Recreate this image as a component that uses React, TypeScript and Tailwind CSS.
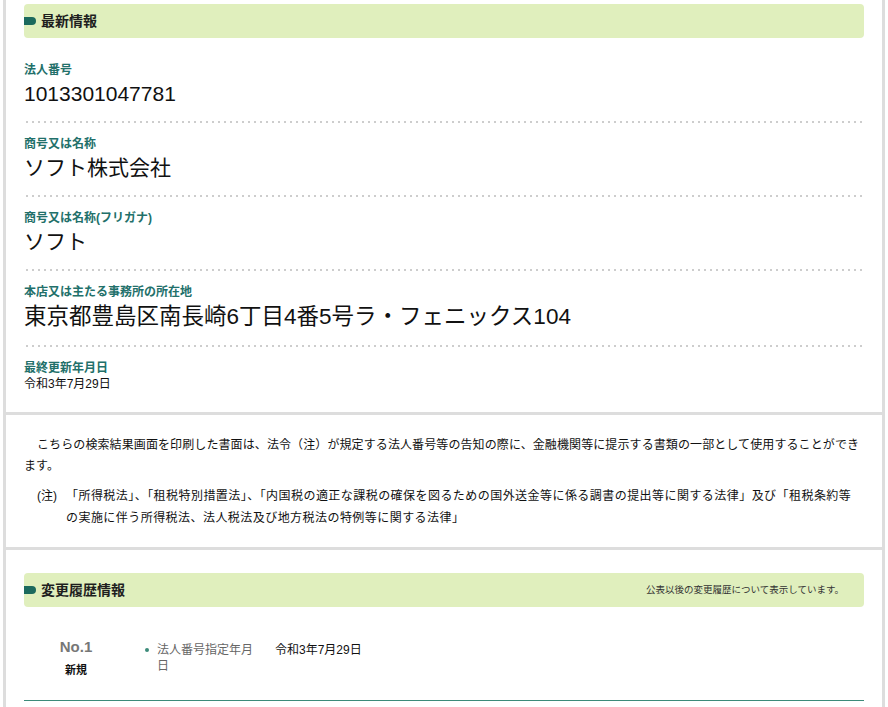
const FONT = "font-['Liberation_Sans','Noto_Sans_CJK_JP',sans-serif]";

const ITEMS = [
  { label: '法人番号', value: '1013301047781', size: 'text-[21px] leading-[28px]' },
  { label: '商号又は名称', value: 'ソフト株式会社', size: 'text-[21px] leading-[28px]' },
  { label: '商号又は名称(フリガナ)', value: 'ソフト', size: 'text-[21px] leading-[28px]' },
  {
    label: '本店又は主たる事務所の所在地',
    value: '東京都豊島区南長崎6丁目4番5号ラ・フェニックス104',
    size: 'text-[22.5px] leading-[30px]',
  },
];

function SectionBar({ title, note }: { title: string; note?: string }) {
  return (
    <div className="flex h-[34px] items-center rounded-[4px] bg-[#e0efbd] pr-[20px]">
      <div className="h-[8px] w-[12px] rounded-r-full bg-[#1c6a5d]" />
      <h2 className="ml-[5px] text-[14px] font-bold text-[#1e1e1e]">{title}</h2>
      {note && <p className="ml-auto text-[9.5px] text-[#333]">{note}</p>}
    </div>
  );
}

function Dots() {
  return (
    <div className="h-[2px] bg-[radial-gradient(circle,#cdcdcd_1px,transparent_1.3px)] bg-[length:6px_2px] bg-repeat-x" />
  );
}

export default function App() {
  return (
    <div className={`${FONT} ml-[3px] w-[882px] border-x-[3px] border-[#dddddd] bg-white text-[#111]`}>
      {/* 最新情報 */}
      <section className="px-[18px] pt-[4px] pb-[20px]">
        <SectionBar title="最新情報" />
        <div className="mt-[24px]">
          {ITEMS.map((item) => (
            <div key={item.label}>
              <div className="text-[12px] leading-[16px] font-bold text-[#22706a]">{item.label}</div>
              <div className={`mt-[2px] ${item.size}`}>{item.value}</div>
              <div className="mt-[13px] mb-[13px]">
                <Dots />
              </div>
            </div>
          ))}
          <div className="text-[12px] leading-[16px] font-bold text-[#22706a]">最終更新年月日</div>
          <div className="text-[12px] leading-[16px]">令和3年7月29日</div>
        </div>
      </section>

      {/* 注意書き */}
      <section className="border-t-[3px] border-[#dddddd] px-[18px] pt-[20px] pb-[18px] text-[12px]">
        <p className="leading-[21px] indent-[13px] tracking-[0.1px]">
          こちらの検索結果画面を印刷した書面は、法令（注）が規定する法人番号等の告知の際に、金融機関等に提示する書類の一部として使用することができ
          <br />
          ます。
        </p>
        <div className="mt-[8px] flex pl-[13px] leading-[22px]">
          <span className="w-[29px] shrink-0">(注)</span>
          <span className="tracking-[0.45px]">
            「所得税法」、「租税特別措置法」、「内国税の適正な課税の確保を図るための国外送金等に係る調書の提出等に関する法律」及び「租税条約等
            <br />
            の実施に伴う所得税法、法人税法及び地方税法の特例等に関する法律」
          </span>
        </div>
      </section>

      {/* 変更履歴情報 */}
      <section className="border-t-[3px] border-[#dddddd] px-[18px] pt-[23px]">
        <SectionBar title="変更履歴情報" note="公表以後の変更履歴について表示しています。" />
        <div className="flex border-b border-[#3d8b7a] pt-[30px] pb-[22px]">
          <div className="w-[104px] shrink-0 text-center">
            <div className="text-[15px] leading-[20px] font-bold text-[#777777]">No.1</div>
            <div className="mt-[5px] text-[11px] leading-[16px] font-bold">新規</div>
          </div>
          <ul className="mt-[5px] ml-[17px] flex text-[12px] leading-[16px]">
            <li className="flex">
              <span className="mt-[6px] mr-[8px] h-[4px] w-[4px] rounded-full bg-[#3d8b7a]" />
              <span className="w-[104px] text-[#666]">法人番号指定年月日</span>
              <span className="ml-[14px]">令和3年7月29日</span>
            </li>
          </ul>
        </div>
        <div className="h-[40px]" />
      </section>
    </div>
  );
}
